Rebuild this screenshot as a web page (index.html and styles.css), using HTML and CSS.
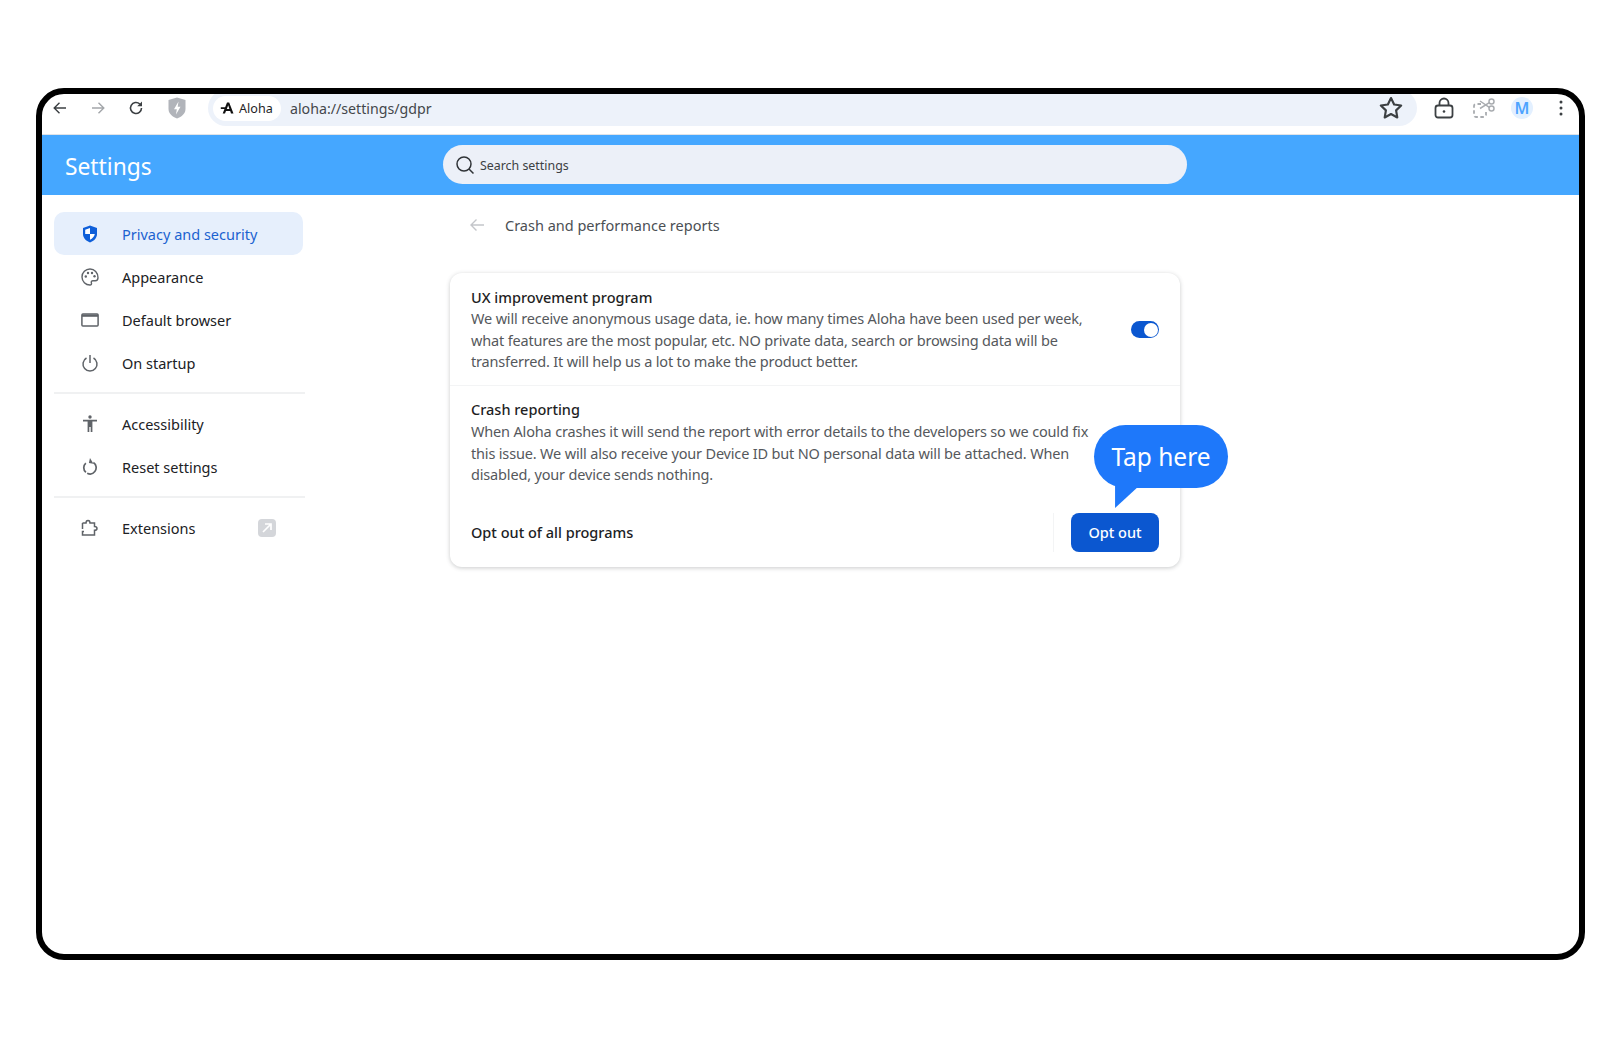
FILE: index.html
```html
<!DOCTYPE html>
<html lang="en">
<head>
<meta charset="utf-8">
<title>Settings</title>
<link rel="stylesheet" href="styles.css">
</head>
<body>
<div class="frame">
  <div class="toolbar">
    <div class="nav-icons">
      <svg class="ti" viewBox="0 0 16 16"><path d="M14 8H2.500M7.500 2.700 2.200 8l5.300 5.300" fill="none" stroke="#3c4043" stroke-width="1.400"/></svg>
      <svg class="ti" viewBox="0 0 16 16"><path d="M2 8h11.500M8.500 2.700 13.800 8l-5.300 5.300" fill="none" stroke="#a4a7ab" stroke-width="1.400"/></svg>
      <svg class="ti" viewBox="0 0 16 16"><path d="M13.500 8a5.500 5.500 0 1 1-1.700-4" fill="none" stroke="#3c4043" stroke-width="1.600"/><path d="M14 1.500v4.800H9.200z" fill="#3c4043"/></svg>
      <svg class="shield" viewBox="0 0 18 22"><path d="M9 .5 17.500 3v9c0 4.500-3.800 7.700-8.500 9.500C4.300 19.700.5 16.500.5 12V3z" fill="#b1b4ba"/><path d="M10.500 4.500 6 12.200h2.800L8 17.500l4.500-7.700H9.700z" fill="#fff"/></svg>
    </div>
    <div class="omnibox">
      <div class="site-chip">
        <svg class="logo" viewBox="0 0 14 14"><path d="M7 1.500h2.200L13.500 12.500h-2.500l-.8-2.500H6L5 12.500H2.700zM6.800 8h2.600L8.200 4.200z" fill="#111"/><path d="M.8 6.300h5.400v1.700H.8z" fill="#111"/></svg>
        <span>Aloha</span>
      </div>
      <span class="url">aloha://settings/gdpr</span>
      <svg class="star" viewBox="0 0 24 24"><path d="m12 2.800 2.900 6 6.500.9-4.700 4.500 1.100 6.500-5.800-3.100-5.800 3.100 1.100-6.500-4.700-4.500 6.500-.9z" fill="none" stroke="#3c4043" stroke-width="2" stroke-linejoin="round"/></svg>
    </div>
    <div class="right-icons">
      <svg class="ri" viewBox="0 0 20 22"><rect x="1.500" y="8.500" width="17" height="12" rx="2.500" fill="none" stroke="#3c4043" stroke-width="1.800"/><path d="M5.500 8.500V6a4.500 4.500 0 0 1 9 0v2.500" fill="none" stroke="#3c4043" stroke-width="1.800"/><circle cx="10" cy="14.500" r="1.300" fill="#3c4043"/></svg>
      <svg class="ri scissors" viewBox="0 0 22 20"><path d="M8 6H3a2 2 0 0 0-2 2v9a2 2 0 0 0 2 2h8a2 2 0 0 0 2-2v-5" fill="none" stroke="#a9acb0" stroke-width="1.800" stroke-dasharray="3.500 2.500"/><circle cx="18.500" cy="3.500" r="2.500" fill="none" stroke="#a9acb0" stroke-width="1.500"/><circle cx="18.500" cy="10.500" r="2.500" fill="none" stroke="#a9acb0" stroke-width="1.500"/><path d="M16.300 4.700 7 10.500M16.300 9.300 7 3" stroke="#a9acb0" stroke-width="1.500"/></svg>
      <div class="avatar">M</div>
      <svg class="menu-dots" viewBox="0 0 4 16"><circle cx="2" cy="2" r="1.500"/><circle cx="2" cy="8" r="1.500"/><circle cx="2" cy="14" r="1.500"/></svg>
    </div>
  </div>

  <header class="settings-head">
    <div class="settings-title">Settings</div>
    <div class="search">
      <svg class="search-icon" viewBox="0 0 20 20"><circle cx="9" cy="9" r="7" fill="none" stroke="#2f3337" stroke-width="1.500"/><path d="m14 14 4.500 4.500" stroke="#2f3337" stroke-width="1.500"/></svg>
      <span>Search settings</span>
    </div>
  </header>

  <div class="body-row">
    <nav class="sidebar">
      <a class="nav-item active">
        <svg class="ni" viewBox="0 0 16 18"><path d="M8 .5 15 3v6c0 4-3 7-7 8.500C4 16 1 13 1 9V3z" fill="#0f5fd9"/><path d="M8 3v6H3.200V4.800zM8 9h4.800c-.4 2.400-2.300 4.500-4.800 5.700z" fill="#fff"/></svg>
        <span>Privacy and security</span>
      </a>
      <a class="nav-item">
        <svg class="ni" viewBox="0 0 18 18"><path d="M9 1a8 8 0 1 0 0 16c1.300 0 1.800-.9 1.400-1.900-.5-1.300.2-2.400 1.600-2.400h2.300c1.800 0 2.700-1.300 2.700-3C17 4.500 13.500 1 9 1z" fill="none" stroke="#5f6368" stroke-width="1.400"/><circle cx="4.800" cy="8.500" r="1.200" fill="#5f6368"/><circle cx="7" cy="5" r="1.200" fill="#5f6368"/><circle cx="11" cy="5" r="1.200" fill="#5f6368"/><circle cx="13.500" cy="8.300" r="1.200" fill="#5f6368"/></svg>
        <span>Appearance</span>
      </a>
      <a class="nav-item">
        <svg class="ni" viewBox="0 0 18 14"><rect x=".9" y=".9" width="16.200" height="12.200" rx="1" fill="none" stroke="#5f6368" stroke-width="1.500"/><path d="M1 1.500h16v2.300H1z" fill="#5f6368"/></svg>
        <span>Default browser</span>
      </a>
      <a class="nav-item">
        <svg class="ni" viewBox="0 0 16 18"><path d="M8 1v8" stroke="#5f6368" stroke-width="1.500"/><path d="M4.500 4A7 7 0 1 0 11.500 4" fill="none" stroke="#5f6368" stroke-width="1.500"/></svg>
        <span>On startup</span>
      </a>
      <div class="nav-rule"></div>
      <a class="nav-item">
        <svg class="ni" viewBox="0 0 16 18"><circle cx="8" cy="2" r="1.700" fill="#5f6368"/><path d="M1 4.800h14v1.700h-4.600V17H8.700v-5H7.300v5H5.600V6.500H1z" fill="#5f6368"/></svg>
        <span>Accessibility</span>
      </a>
      <a class="nav-item">
        <svg class="ni" viewBox="0 0 16 16"><path d="M4.300 4.500A5.500 5.500 0 1 0 11 4" fill="none" stroke="#5f6368" stroke-width="1.500" stroke-dasharray="9 1.500 20"/><path d="m8 0-1 4.500L11 5z" fill="#5f6368"/></svg>
        <span>Reset settings</span>
      </a>
      <div class="nav-rule"></div>
      <a class="nav-item">
        <svg class="ni" viewBox="0 0 18 18"><path d="M1.500 4H5c0-3.500 4-3.500 4 0h4.500v3.500c3.300 0 3.300 3.800 0 3.800V16H1.500v-3.500h1.500M1.500 10V4" fill="none" stroke="#5f6368" stroke-width="1.500"/></svg>
        <span>Extensions</span>
        <span class="ext-badge"><svg viewBox="0 0 18 18"><path d="M5 13 13 5M7 5h6v6" fill="none" stroke="#fff" stroke-width="1.700"/></svg></span>
      </a>
    </nav>

    <main class="content">
      <div class="subpage-head">
        <svg class="back" viewBox="0 0 16 14"><path d="M15 7H2M7.500 1.500 2 7l5.500 5.500" fill="none" stroke="#c4c6ca" stroke-width="1.400"/></svg>
        <h1>Crash and performance reports</h1>
      </div>
      <section class="card">
        <div class="row row-first">
          <div class="row-text">
            <h2>UX improvement program</h2>
            <p>We will receive anonymous usage data, ie. how many times Aloha have been used per week, what features are the most popular, etc. NO private data, search or browsing data will be transferred. It will help us a lot to make the product better.</p>
          </div>
          <div class="toggle"><div class="knob"></div></div>
        </div>
        <div class="row row-second">
          <div class="row-text wide">
            <h2>Crash reporting</h2>
            <p>When Aloha crashes it will send the report with error details to the developers so we could fix this issue. We will also receive your Device ID but NO personal data will be attached. When disabled, your device sends nothing.</p>
          </div>
        </div>
        <div class="row-opt">
          <span class="opt-label">Opt out of all programs</span>
          <div class="opt-side"><button class="opt-btn">Opt out</button></div>
        </div>
        <div class="bubble">
          <span>Tap here</span>
          <svg class="tail" viewBox="0 0 26 24"><path d="M0 0h26L0 24z" fill="#1e78fa"/></svg>
        </div>
      </section>
    </main>
  </div>
</div>
</body>
</html>
```

FILE: styles.css
```css
* { box-sizing: border-box; }
html, body { margin: 0; height: 100%; background: #fff; }
body {
  padding: 88px 36px;
  font-family: "Noto Sans", "Open Sans", sans-serif;
  color: #202124;
}
.frame {
  width: 1549px;
  height: 872px;
  border: 6px solid #000;
  border-radius: 28px;
  overflow: hidden;
  background: #fff;
  display: flex;
  flex-direction: column;
}
.toolbar {
  height: 41px;
  display: flex;
  align-items: center;
  padding: 0 10px 12px 10px;
  border-bottom: 1px solid #dfe3e8;
  flex: none;
}
.nav-icons { display: flex; align-items: center; gap: 22px; width: 156px; flex: none; }
.ti { width: 16px; height: 16px; flex: none; }
.shield { width: 18px; height: 22px; margin-left: 2px; flex: none; }
.omnibox {
  width: 1209px;
  height: 36px;
  background: #edf2fa;
  border-radius: 18px;
  display: flex;
  align-items: center;
  padding: 0 13px 0 5px;
  flex: none;
}
.site-chip {
  height: 25px;
  width: 68px;
  background: #fff;
  border-radius: 13px;
  display: flex;
  align-items: center;
  gap: 5px;
  padding-left: 7px;
  font-size: 12.600px;
  color: #1f1f1f;
}
.logo { width: 14px; height: 14px; }
.url { margin-left: 9px; font-size: 14.200px; color: #44474b; flex: 1; }
.star { width: 26px; height: 26px; }
.right-icons { display: flex; align-items: center; margin-left: 17px; flex: 1; }
.ri { width: 20px; height: 22px; margin-right: 19px; flex: none; }
.scissors { width: 22px; height: 20px; margin-right: 16px; }
.avatar {
  width: 22px; height: 22px; border-radius: 50%;
  background: #e3f0ff; color: #4da3ff;
  font-size: 16px; font-weight: 600; text-align: center; line-height: 22px;
}
.menu-dots { width: 4px; height: 16px; fill: #3c4043; margin-left: 26px; }

.settings-head {
  height: 60px;
  background: #45a7ff;
  display: flex;
  align-items: center;
  flex: none;
}
.settings-title { width: 401px; padding: 2px 0 0 23px; font-size: 22.800px; color: #fff; flex: none; }
.search {
  width: 744px;
  height: 39px;
  margin-bottom: 2px;
  border-radius: 20px;
  background: #ecf0f8;
  display: flex;
  align-items: center;
  padding: 2px 0 0 12px;
  gap: 5px;
  font-size: 12.400px;
  color: #3c4043;
}
.search-icon { width: 20px; height: 20px; }

.body-row { display: flex; flex: 1; }
.sidebar { width: 401px; padding: 17px 0 0 12px; flex: none; }
.nav-item {
  width: 249px;
  height: 43px;
  display: flex;
  align-items: center;
  padding: 0 0 0 27px;
  font-size: 14.500px;
  color: #202124;
  border-radius: 10px;
}
.nav-item.active { background: #e6effc; color: #1b62d0; }
.ni { width: 18px; height: 18px; margin-right: 23px; flex: none; }
.nav-rule { width: 251px; height: 2px; background: #f0f1f2; margin: 8px 0; }
.ext-badge {
  width: 18px; height: 18px; background: #d4d6da; border-radius: 4px;
  margin-left: auto; margin-right: 27px; display: flex;
}
.ext-badge svg { width: 18px; height: 18px; }

.content { flex: 1; padding-top: 15px; }
.subpage-head { display: flex; align-items: center; height: 30px; padding-left: 26px; }
.back { width: 16px; height: 14px; margin-right: 20px; flex: none; }
.subpage-head h1 { margin: 0; font-size: 14.500px; font-weight: 400; color: #4b4f54; }
.card {
  position: relative;
  width: 730px;
  height: 294px;
  margin: 33px 0 0 7px;
  background: #fff;
  border-radius: 12px;
  box-shadow: 0 1px 4px rgba(60, 64, 67, .28);
}
.row { display: flex; padding: 12px 21px 0; }
.row-first { height: 113px; padding-top: 13px; border-bottom: 1px solid #f3f4f5; align-items: flex-start; }
.row-second { height: 117px; }
.row-text { width: 625px; }
.row-text.wide { width: 632px; }
.row-text h2 { margin: 0; font-size: 14.500px; line-height: 22px; font-weight: 500; color: #1f1f1f; }
.row-second h2 { margin-bottom: 1px; }
.row-text p { margin: 0; font-size: 14.500px; letter-spacing: -.17px; line-height: 21.500px; color: #55585c; }
.row-second p { line-height: 21.700px; }
.toggle {
  width: 28px; height: 17px; background: #0b57d0; border-radius: 9px;
  margin: 35px 0 0 auto; position: relative; flex: none;
}
.knob { position: absolute; right: 1.500px; top: 1.500px; width: 14px; height: 14px; background: #fff; border-radius: 50%; }
.row-opt { display: flex; align-items: center; justify-content: space-between; padding: 0 21px; height: 58px; }
.opt-label { font-size: 14.500px; font-weight: 500; color: #202124; }
.opt-side { border-left: 1px solid #f3f4f5; padding-left: 17px; height: 39px; }
.opt-btn {
  width: 88px; height: 39px; border: 0; border-radius: 8px; background: #0b57d0;
  color: #fff; font: 500 14.500px "Noto Sans", sans-serif;
}
.bubble {
  position: absolute;
  left: 644px;
  top: 152px;
  width: 134px;
  height: 63px;
  background: #1e78fa;
  border-radius: 32px;
  color: #fff;
  font-size: 24.500px;
  display: flex;
  align-items: center;
  justify-content: center;
}
.tail { position: absolute; left: 21px; top: 61px; width: 24px; height: 22px; }
```
